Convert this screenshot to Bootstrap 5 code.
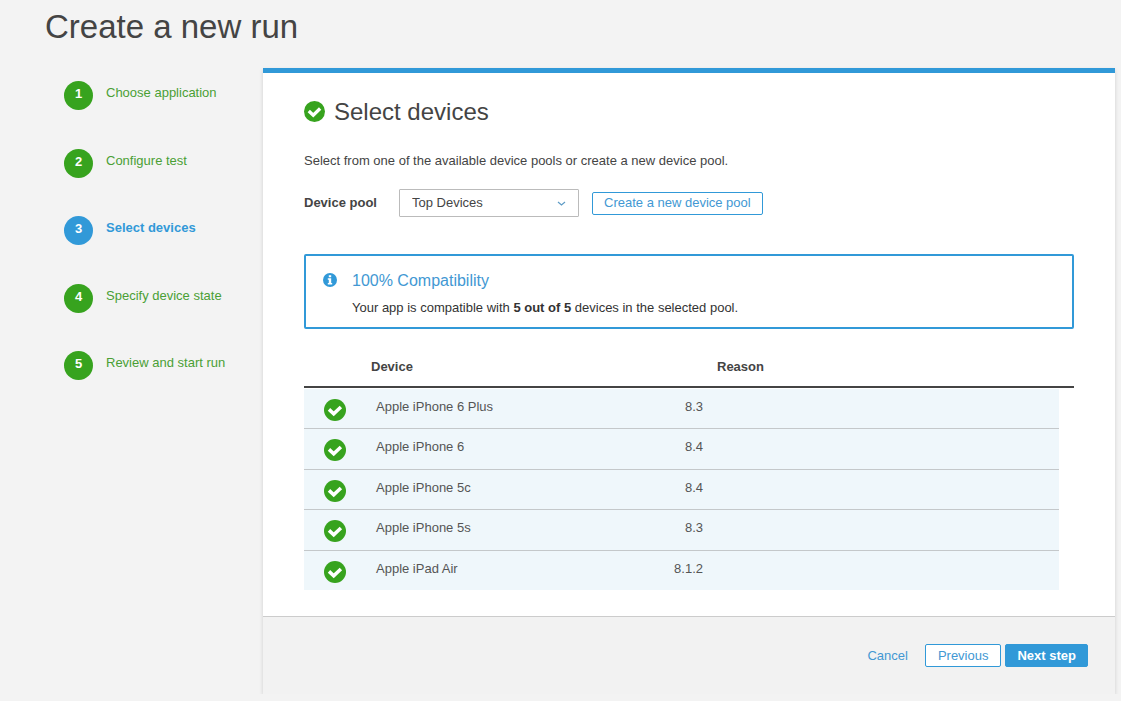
<!DOCTYPE html>
<html lang="en">
<head>
<meta charset="utf-8">
<meta name="viewport" content="width=device-width, initial-scale=1">
<title>Create a new run</title>
<link href="https://cdn.jsdelivr.net/npm/bootstrap@5.3.0/dist/css/bootstrap.min.css" rel="stylesheet">
<script src="https://cdn.jsdelivr.net/npm/bootstrap@5.3.0/dist/js/bootstrap.bundle.min.js" defer></script>
<style>
  :root { --run-blue: #3199d8; --run-green: #37a31e; --run-ink: #444; }
  body { font-family: "Liberation Sans", Arial, sans-serif; font-size: 13px; line-height: 20px; color: var(--run-ink); background: #f3f3f3; }
  a { text-decoration: none; color: #4298d3; }
  .page-title { font-size: 33px; line-height: 40px; padding: 7px 0 21px 45px; margin: 0; font-weight: 400; }
  .step-nav { flex: 0 0 263px; padding: 13px 0 0 64px; }
  .step-list { height: 299px; }
  .step-list a { display: flex; gap: 13px; color: #4a9f35; }
  .step-num { width: 29px; height: 29px; line-height: 25px; border-radius: 50%; background: var(--run-green); color: #fff; font-weight: 700; text-align: center; }
  .step-text { line-height: 24px; }
  .step-list a.current { color: var(--run-blue); font-weight: 700; }
  .current .step-num { background: var(--run-blue); }
  .wizard { border-top: 5px solid var(--run-blue); background: #fff; box-shadow: 0 2px 4px rgba(0,0,0,.15); margin-right: 6px; min-width: 0; }
  .wizard-main { padding: 24px 41px 26px; }
  .wizard-title { font-size: 24px; line-height: 30px; gap: 9px; margin: 0 0 24px; font-weight: 400; }
  .wizard-title svg { margin-bottom: 2px; }
  .pool-form { margin-top: 18px; gap: 13px; }
  .pool-label { width: 82px; font-weight: 700; }
  .pool-select { width: 180px; height: 28px; padding: 0 30px 0 12px; font-size: 13px; line-height: 20px; color: var(--run-ink); border: 1px solid #bbb; border-radius: 1px; background-position: right 12px center; background-size: 9px 9px;
    background-image: url("data:image/svg+xml,%3Csvg xmlns='http://www.w3.org/2000/svg' viewBox='0 0 9 9'%3E%3Cpath d='M1 3l3.5 3L8 3' fill='none' stroke='%235f9cc6' stroke-width='1.2'/%3E%3C/svg%3E"); }
  .run-btn { --bs-btn-font-size: 13px; --bs-btn-line-height: 19px; --bs-btn-padding-y: 1px; --bs-btn-padding-x: 12px; --bs-btn-border-radius: 2px; --bs-btn-color: #4298d3; --bs-btn-bg: #fff; --bs-btn-border-color: var(--run-blue); --bs-btn-hover-bg: #e8f4fb; --bs-btn-hover-color: #2279b0; --bs-btn-hover-border-color: #2279b0; }
  .pool-form .run-btn { padding: 0 11px 2px; }
  .run-btn-solid { --bs-btn-bg: var(--run-blue); --bs-btn-color: #fff; --bs-btn-padding-x: 11px; --bs-btn-hover-bg: #2279b0; --bs-btn-hover-color: #fff; font-weight: 700; }
  .notice { border: 2px solid var(--run-blue); border-radius: 2px; margin: 37px 0 27px; padding: 15px 17px 9px; gap: 15px; color: #333; }
  .notice h3 { font-size: 16px; line-height: 20px; margin: 0 0 7px; color: #4298d3; font-weight: 400; }
  .notice svg { margin-top: 2px; }
  .devices { width: 100%; border-collapse: separate; border-spacing: 0; table-layout: fixed; }
  .devices th { padding: 0 0 9px; height: 32px; border-bottom: 2px solid #444; vertical-align: bottom; }
  .devices th.reason-head { padding-left: 56px; }
  .devices td { height: 40px; padding: 8px 0 0; vertical-align: top; background: #eff7fb; border-bottom: 1px solid #c4c8ca; color: #555; }
  .devices tr:nth-child(even) td { height: 41px; }
  .devices tr:first-child td { height: 41px; border-top: 1px solid #fff; }
  .devices tr:last-child td { height: 39px; border-bottom: 0; }
  .devices td.tick { padding: 10px 0 0 20px; }
  .devices td.device-name { padding-left: 5px; }
  .devices td.gutter { background: none; border: 0; }
  .tick svg { display: block; }
  .os-version { display: inline-block; width: 42px; text-align: right; }
  .col-tick { width: 67px; } .col-device { width: 290px; } .col-gutter { width: 15px; }
  .wizard-foot { border-top: 1px solid #ccc; background: #f2f2f2; padding: 27px; }
  .cancel-link { margin-right: 13px; }
</style>
</head>
<body>
<svg class="d-none" aria-hidden="true">
  <symbol id="check" viewBox="0 0 22 22"><circle cx="11" cy="11" r="11" fill="#37a31e"/><path d="M5 10.4l4.7 4.4 7.2-6.9" fill="none" stroke="#fff" stroke-width="3.5"/></symbol>
</svg>
<header><h1 class="page-title">Create a new run</h1></header>
<div class="d-flex align-items-start">
  <nav class="step-nav" aria-label="Steps">
    <ol class="step-list list-unstyled d-flex flex-column justify-content-between m-0">
      <li><a href="#"><span class="step-num">1</span><span class="step-text">Choose application</span></a></li>
      <li><a href="#"><span class="step-num">2</span><span class="step-text">Configure test</span></a></li>
      <li><a href="#" class="current" aria-current="step"><span class="step-num">3</span><span class="step-text">Select devices</span></a></li>
      <li><a href="#"><span class="step-num">4</span><span class="step-text">Specify device state</span></a></li>
      <li><a href="#"><span class="step-num">5</span><span class="step-text">Review and start run</span></a></li>
    </ol>
  </nav>
  <main class="wizard flex-grow-1">
    <div class="wizard-main">
      <h2 class="wizard-title d-flex align-items-center"><svg width="21" height="21" aria-hidden="true"><use href="#check"/></svg>Select devices</h2>
      <p class="m-0">Select from one of the available device pools or create a new device pool.</p>
      <form class="pool-form d-flex align-items-center">
        <label class="pool-label" for="pool">Device pool</label>
        <select class="pool-select form-select" id="pool"><option>Top Devices</option></select>
        <button type="button" class="btn run-btn">Create a new device pool</button>
      </form>
      <section class="notice d-flex align-items-start">
        <svg width="14" height="14" viewBox="0 0 14 14" aria-hidden="true"><circle cx="7" cy="7" r="7" fill="#3199d8"/><path d="M5.8 2.2h2.4v2H5.8zM4.8 5.3h3.4v4.6h1v1.5H4.8V9.9h1V6.8h-1z" fill="#fff"/></svg>
        <div>
          <h3>100% Compatibility</h3>
          <p class="m-0">Your app is compatible with <strong>5 out of 5</strong> devices in the selected pool.</p>
        </div>
      </section>
      <table class="devices">
        <colgroup><col class="col-tick"><col class="col-device"><col><col class="col-gutter"></colgroup>
        <thead><tr><th></th><th scope="col">Device</th><th scope="col" class="reason-head">Reason</th><th></th></tr></thead>
        <tbody>
          <tr><td class="tick"><svg width="22" height="22" role="img" aria-label="Compatible"><use href="#check"/></svg></td><td class="device-name">Apple iPhone 6 Plus</td><td><span class="os-version">8.3</span></td><td class="gutter"></td></tr>
          <tr><td class="tick"><svg width="22" height="22" role="img" aria-label="Compatible"><use href="#check"/></svg></td><td class="device-name">Apple iPhone 6</td><td><span class="os-version">8.4</span></td><td class="gutter"></td></tr>
          <tr><td class="tick"><svg width="22" height="22" role="img" aria-label="Compatible"><use href="#check"/></svg></td><td class="device-name">Apple iPhone 5c</td><td><span class="os-version">8.4</span></td><td class="gutter"></td></tr>
          <tr><td class="tick"><svg width="22" height="22" role="img" aria-label="Compatible"><use href="#check"/></svg></td><td class="device-name">Apple iPhone 5s</td><td><span class="os-version">8.3</span></td><td class="gutter"></td></tr>
          <tr><td class="tick"><svg width="22" height="22" role="img" aria-label="Compatible"><use href="#check"/></svg></td><td class="device-name">Apple iPad Air</td><td><span class="os-version">8.1.2</span></td><td class="gutter"></td></tr>
        </tbody>
      </table>
    </div>
    <footer class="wizard-foot d-flex justify-content-end align-items-center gap-1">
      <a href="#" class="cancel-link">Cancel</a>
      <button type="button" class="btn run-btn">Previous</button>
      <button type="button" class="btn run-btn run-btn-solid">Next step</button>
    </footer>
  </main>
</div>
</body>
</html>
